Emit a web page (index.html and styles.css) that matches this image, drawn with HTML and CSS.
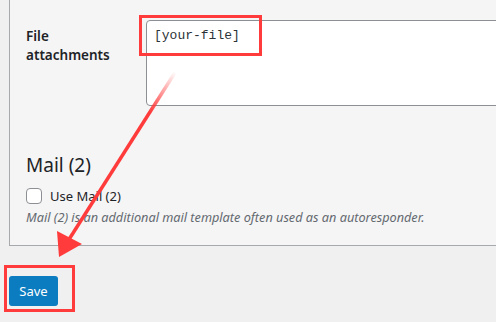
FILE: index.html
```html
<!DOCTYPE html>
<html>
<head>
  <title>Contact Form - Mail</title>
  <link rel="stylesheet" href="styles.css">
</head>
<body>
  <div class="panel">
    <div class="field-row">
      <label class="field-label" for="attachments">File attachments</label>
      <textarea id="attachments" class="field-input">[your-file]</textarea>
    </div>

    <h2 class="section-title">Mail (2)</h2>
    <label class="check-row">
      <input type="checkbox" class="check">
      <span>Use Mail (2)</span>
    </label>
    <p class="description">Mail (2) is an additional mail template often used as an autoresponder.</p>
  </div>

  <div class="actions">
    <button class="save-button">Save</button>
  </div>

  <!-- annotations drawn over the screenshot -->
  <div class="mark mark-field"></div>
  <div class="mark mark-save"></div>
  <svg class="arrow" width="496" height="322" viewBox="0 0 496 322">
    <defs>
      <linearGradient id="fade" x1="175" y1="72" x2="150" y2="112" gradientUnits="userSpaceOnUse">
        <stop offset="0" stop-color="#ff3b3b" stop-opacity="0"/>
        <stop offset="1" stop-color="#ff3b3b" stop-opacity="1"/>
      </linearGradient>
    </defs>
    <line x1="176" y1="71" x2="68" y2="241" stroke="url(#fade)" stroke-width="3.5"/>
    <polygon points="59,257 57,231 82,244" fill="#ff3b3b"/>
  </svg>
</body>
</html>
```

FILE: styles.css
```css
body {
  font-family: "Noto Sans", "Open Sans", sans-serif;
  font-size: 13px;
  color: #1d2327;
  background-color: #f0f0f1;
  margin: 0;
  height: 322px;
  overflow: hidden;
  position: relative;
}
.panel {
  margin-left: 9px;
  overflow: hidden;
  background: #f5f5f5;
  border-left: 1px solid #a7aaad;
  border-bottom: 1px solid #a7aaad;
  padding: 20px 0 19px 16px;
}
.field-row {
  display: flex;
  align-items: flex-start;
}
.field-label {
  width: 92px;
  flex-shrink: 0;
  padding: 7px 28px 0 0;
  font-weight: 600;
  font-size: 13.5px;
  line-height: 19px;
}
.field-input {
  width: 380px;
  flex-shrink: 0;
  height: 86px;
  box-sizing: border-box;
  margin: 0;
  padding: 6px 7px;
  border: 1px solid #8c8f94;
  border-radius: 4px;
  background: #fff;
  font-family: "Liberation Mono", monospace;
  font-size: 13px;
  line-height: 18px;
  color: #2c3338;
  resize: none;
}
.section-title {
  margin: 46px 0 9px;
  font-size: 19px;
  font-weight: 400;
  line-height: 26px;
}
.check-row {
  display: flex;
  align-items: center;
  gap: 8px;
}
.check {
  appearance: none;
  width: 16px;
  height: 16px;
  margin: 0;
  border: 1px solid #8c8f94;
  border-radius: 4px;
  background: #fff;
}
.description {
  margin: 3px 0 0;
  font-style: italic;
  font-size: 12.7px;
  color: #646970;
  line-height: 18px;
}
.actions {
  padding: 30px 0 0 9px;
}
.save-button {
  width: 49px;
  height: 30px;
  padding: 0;
  border: none;
  border-radius: 3px;
  background: #0b7cbf;
  color: #fff;
  font-family: "Noto Sans", "Open Sans", sans-serif;
  font-size: 13px;
}
.mark {
  position: absolute;
  border: 3px solid #ff3b3b;
  box-sizing: border-box;
}
.mark-field {
  left: 139px;
  top: 15px;
  width: 123px;
  height: 41px;
}
.mark-save {
  left: 4px;
  top: 265px;
  width: 71px;
  height: 47px;
}
.arrow {
  position: absolute;
  left: 0;
  top: 0;
}
```
